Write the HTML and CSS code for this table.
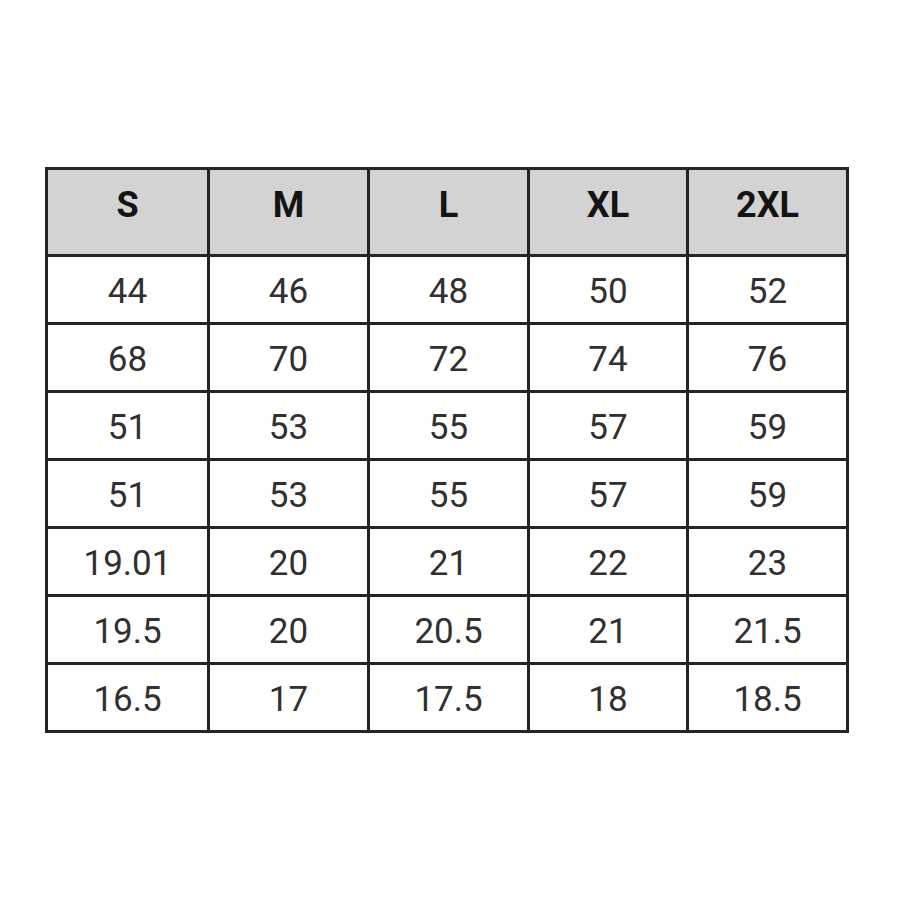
FILE: index.html
```html
<!DOCTYPE html>
<html>
<head>
<meta charset="utf-8">
<link rel="stylesheet" href="styles.css">
</head>
<body>
<div class="page">
<div class="sizes">
<div class="cell head">S</div><div class="cell head">M</div><div class="cell head">L</div><div class="cell head">XL</div><div class="cell head">2XL</div>
<div class="cell">44</div><div class="cell">46</div><div class="cell">48</div><div class="cell">50</div><div class="cell">52</div>
<div class="cell">68</div><div class="cell">70</div><div class="cell">72</div><div class="cell">74</div><div class="cell">76</div>
<div class="cell">51</div><div class="cell">53</div><div class="cell">55</div><div class="cell">57</div><div class="cell">59</div>
<div class="cell">51</div><div class="cell">53</div><div class="cell">55</div><div class="cell">57</div><div class="cell">59</div>
<div class="cell">19.01</div><div class="cell">20</div><div class="cell">21</div><div class="cell">22</div><div class="cell">23</div>
<div class="cell">19.5</div><div class="cell">20</div><div class="cell">20.5</div><div class="cell">21</div><div class="cell">21.5</div>
<div class="cell">16.5</div><div class="cell">17</div><div class="cell">17.5</div><div class="cell">18</div><div class="cell">18.5</div>
</div>
</div>
</body>
</html>
```
FILE: styles.css
```css
html, body {
  margin: 0;
  padding: 0;
  background: #fff;
}
.page {
  padding: 167px 0 0 45px;
}
.sizes {
  display: inline-grid;
  grid-template-columns: 159px 157px 157px 156px 157px;
  grid-template-rows: 84px repeat(7, 65px);
  gap: 3px;
  padding: 3px;
  background: #242424;
  font-family: Roboto, "Liberation Sans", sans-serif;
}
.cell {
  background: #fff;
  display: flex;
  align-items: center;
  justify-content: center;
  font-size: 35px;
  color: #303030;
  line-height: 1;
  padding-top: 4px;
}
.head {
  background: #d3d3d3;
  font-size: 36px;
  font-weight: bold;
  color: #141414;
  padding-top: 0;
  padding-bottom: 14px;
}
```
